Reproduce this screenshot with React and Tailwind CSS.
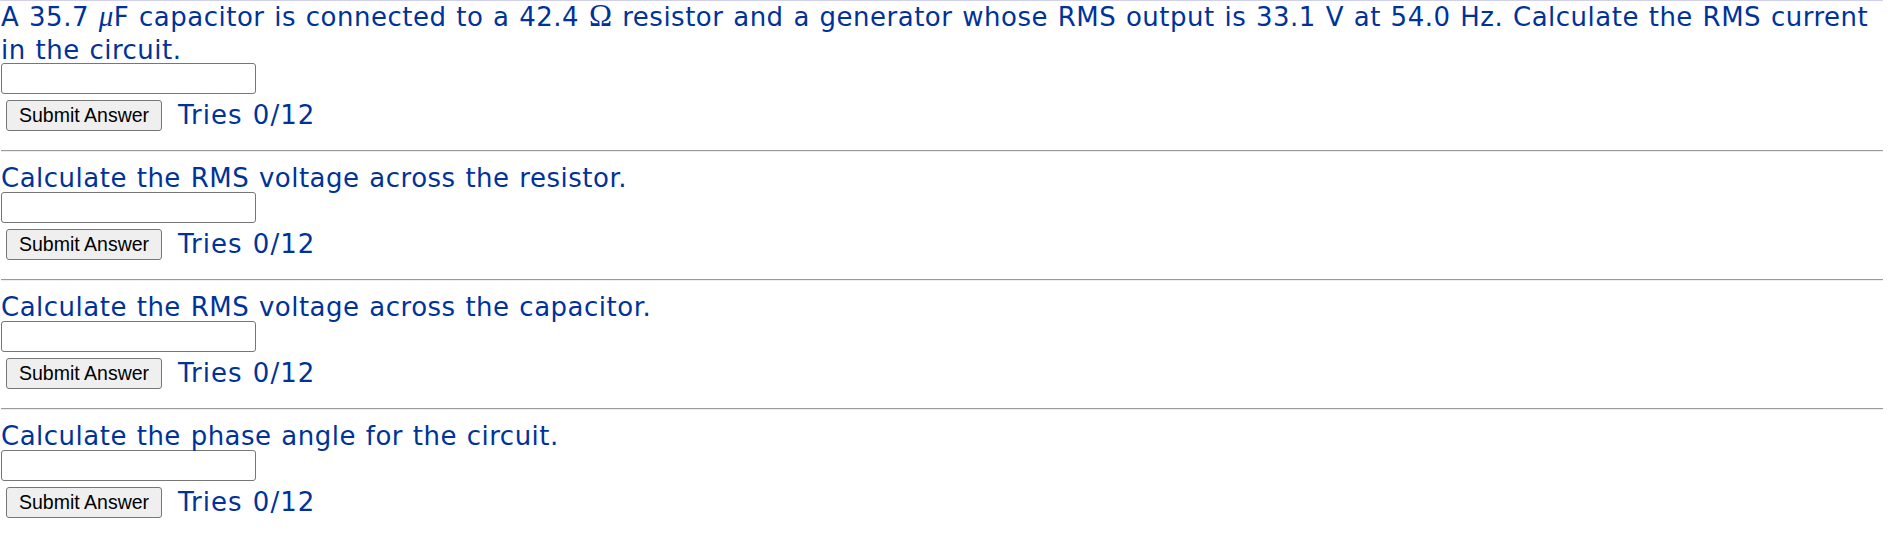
import React from 'react';

const questions = [
  null,
  'Calculate the RMS voltage across the resistor.',
  'Calculate the RMS voltage across the capacitor.',
  'Calculate the phase angle for the circuit.',
];

const AnswerRow = () => (
  <div className="mt-[6px] flex h-[31px] items-center">
    <button className="ml-[5px] h-[31px] rounded-[3px] border border-[#767676] bg-[#efefef] px-3 font-['Liberation_Sans',Arial,sans-serif] text-[19.5px] leading-none tracking-normal text-black [word-spacing:0]">
      Submit Answer
    </button>
    <span className="ml-4 leading-[31px] tracking-[1px]">Tries 0/12</span>
  </div>
);

const Rule = () => (
  <div className="mt-[19px] mb-[10px] h-[2px] border-t border-b border-t-[#9a9a9a] border-b-[#eeeeee]" />
);

export default function App() {
  return (
    <div className="w-[1883px] border-t border-[#d0d0e8] bg-white pl-px font-['DejaVu_Sans',Verdana,sans-serif] text-[26px] tracking-[0.5px] text-[#003399] [word-spacing:1px]">
      {questions.map((q, i) => (
        <div key={i}>
          {i > 0 && <Rule />}
          <div className="whitespace-nowrap leading-[33px]">
            {q === null ? (
              <>
                A 35.7 <span className="font-['Liberation_Serif',serif] text-[29px] leading-[20px] italic">μ</span>F capacitor is connected to a 42.4{' '}
                <span className="font-['Liberation_Serif',serif] text-[31px] leading-[20px]">Ω</span> resistor and a generator whose RMS output is 33.1 V at 54.0 Hz. Calculate the RMS current
                <br />
                in the circuit.
              </>
            ) : (
              q
            )}
          </div>
          <input
            type="text"
            className={`${i === 0 ? '-mt-1' : '-mt-[3px]'} block h-[31px] w-[255px] rounded-[3px] border border-[#767676] bg-white px-1 text-[20px] text-black outline-none`}
          />
          <AnswerRow />
        </div>
      ))}
    </div>
  );
}
